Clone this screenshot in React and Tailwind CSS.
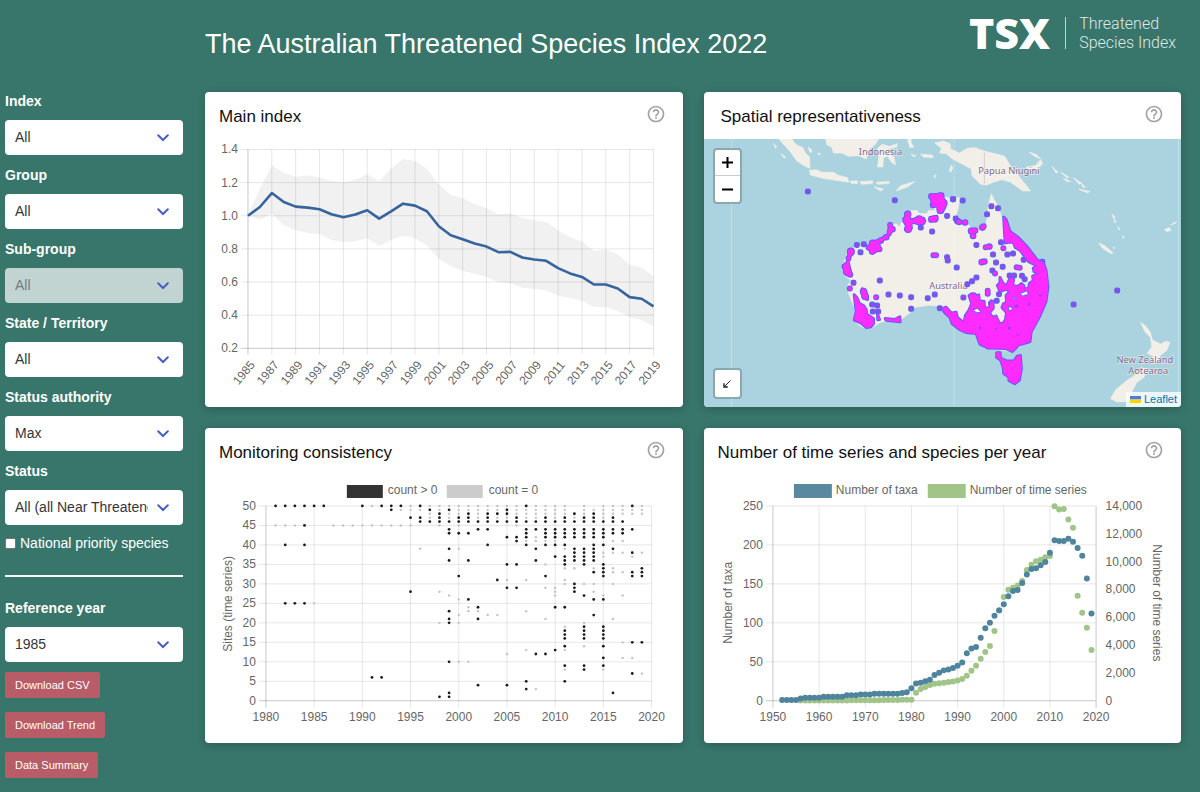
import { useState } from 'react'
import { MdHelpOutline } from 'react-icons/md'

const FILTERS = [
  { id: 'index', label: 'Index', options: ['All', 'Birds', 'Mammals', 'Plants'] },
  { id: 'group', label: 'Group', options: ['All'] },
  { id: 'subgroup', label: 'Sub-group', options: ['All'], disabled: true },
  { id: 'state', label: 'State / Territory', options: ['All', 'New South Wales', 'Queensland', 'Victoria'] },
  { id: 'authority', label: 'Status authority', options: ['Max', 'EPBC', 'BirdActionPlan'] },
  { id: 'status', label: 'Status', options: ['All (all Near Threatened and Threatened)', 'Near Threatened'] },
]

// Main index, one value per year from 1985
const INDEX = [1, 1.053, 1.137, 1.083, 1.055, 1.049, 1.039, 1.009, 0.991, 1.007, 1.033, 0.983, 1.027, 1.073, 1.061, 1.027, 0.937, 0.882, 0.858, 0.832, 0.814, 0.78, 0.782, 0.748, 0.736, 0.728, 0.684, 0.652, 0.631, 0.585, 0.585, 0.561, 0.509, 0.499, 0.453]
const UPPER = [1, 1.163, 1.304, 1.26, 1.235, 1.245, 1.231, 1.211, 1.201, 1.217, 1.25, 1.209, 1.284, 1.342, 1.33, 1.284, 1.189, 1.125, 1.105, 1.071, 1.045, 1.009, 1.015, 0.987, 0.973, 0.963, 0.912, 0.87, 0.844, 0.786, 0.796, 0.768, 0.702, 0.688, 0.635]
const LOWER = [1, 0.977, 1.013, 0.943, 0.912, 0.898, 0.888, 0.854, 0.84, 0.848, 0.864, 0.818, 0.854, 0.88, 0.864, 0.822, 0.74, 0.696, 0.668, 0.65, 0.631, 0.599, 0.593, 0.565, 0.559, 0.549, 0.519, 0.503, 0.485, 0.449, 0.449, 0.425, 0.387, 0.371, 0.332]

// Sites with a count, by year
const COUNTED = {
  1981: [50], 1982: [50, 40, 25], 1983: [50, 25], 1984: [50, 45, 40, 25], 1985: [50], 1986: [50], 1990: [50],
  1991: [6], 1992: [50, 6], 1993: [50, 49], 1994: [50], 1995: [47, 28], 1996: [50, 47, 46], 1997: [49, 46],
  1998: [48, 47, 46, 1],
  1999: [49, 46, 44, 43, 39, 36, 23, 21, 20, 10, 2, 1],
  2000: [47, 46, 43, 32],
  2001: [48, 47, 46, 43, 36, 26],
  2002: [46, 44, 24, 21, 4],
  2003: [48, 47, 46, 44, 40],
  2004: [48, 46, 31],
  2005: [49, 48, 46, 42, 35, 29, 4],
  2006: [47, 46, 42, 41, 35, 29],
  2007: [50, 46, 44, 43, 42, 40, 5, 3],
  2008: [46, 44, 39, 36, 12],
  2009: [47, 46, 44, 43, 42, 40, 32, 12],
  2010: [46, 44, 43, 42, 40, 37, 24, 13],
  2011: [47, 46, 44, 43, 42, 40, 37, 36, 35, 24, 18, 17, 16, 14, 9, 5],
  2012: [48, 46, 44, 43, 42, 39, 38, 37, 36, 30, 29, 28],
  2013: [47, 46, 44, 43, 42, 39, 38, 37, 36, 35, 27, 19, 18, 17, 16, 9, 8],
  2014: [48, 47, 46, 44, 43, 42, 40, 39, 38, 37, 36, 33, 26, 22],
  2015: [46, 44, 43, 42, 40, 35, 34, 33, 32, 26, 19, 18, 17, 16, 14, 11, 9],
  2016: [47, 46, 44, 43, 39, 2],
  2017: [46, 44, 43],
  2018: [50, 44, 38, 33, 32, 15, 7],
  2019: [34, 33, 32, 15],
}

// Sites surveyed with nothing found, by year
const ZERO = {
  1981: [45], 1982: [45], 1983: [45], 1985: [25], 1987: [45], 1988: [45], 1989: [45], 1990: [45],
  1991: [50, 45], 1992: [45], 1993: [45], 1994: [49, 45], 1995: [50, 49, 45], 1996: [49, 39], 1997: [50, 48, 47],
  1998: [50, 49, 45, 28, 20],
  1999: [50, 48, 47, 27],
  2000: [50, 49, 48, 45, 39, 26, 22, 20, 10],
  2001: [50, 49, 24, 23, 10],
  2002: [50, 49, 48, 47, 23],
  2003: [50, 49, 22],
  2004: [50, 49, 47, 22],
  2005: [50, 47, 31, 12],
  2006: [50, 49, 48, 45],
  2007: [49, 48, 47, 41, 31, 23, 13],
  2008: [50, 49, 48, 47, 42, 41, 3],
  2009: [50, 49, 48, 41, 35, 29, 21],
  2010: [50, 49, 48, 47, 41, 29, 28, 27],
  2011: [50, 49, 48, 39, 34, 31, 30, 19, 13, 8],
  2012: [47, 34, 30],
  2013: [50, 49, 48, 30, 20, 14],
  2014: [49, 34, 30, 28],
  2015: [50, 49, 48, 47, 38, 37, 27, 8],
  2016: [50, 49, 48, 41, 38, 34, 33, 30, 21],
  2017: [50, 49, 48, 41, 38, 33, 27, 15, 11],
  2018: [49, 48, 37, 11],
  2019: [50, 49, 48, 38, 7],
}

// Both start in 1952
const TAXA = [1, 1, 1, 1, 3, 4, 4, 4, 4, 5, 5, 5, 5, 5, 7, 7, 7, 8, 8, 8, 9, 9, 9, 9, 9, 9, 10, 11, 16, 22, 23, 25, 27, 33, 36, 39, 40, 42, 45, 49, 61, 67, 69, 81, 93, 100, 109, 116, 124, 134, 141, 142, 151, 162, 169, 170, 174, 178, 190, 206, 205, 205, 208, 204, 196, 186, 157, 112]
const SERIES = [10, 10, 10, 10, 15, 15, 15, 15, 20, 20, 20, 20, 25, 25, 25, 30, 30, 35, 35, 40, 40, 45, 50, 50, 55, 60, 65, 70, 80, 575, 840, 985, 1130, 1220, 1250, 1290, 1340, 1390, 1460, 1560, 1800, 2160, 2520, 3020, 3500, 3930, 5010, 6500, 7455, 7980, 8130, 8290, 8600, 9400, 9780, 10020, 10140, 10310, 10400, 13980, 13740, 13780, 13020, 12440, 7550, 6330, 5250, 3640]

const range = (from, to, step) => {
  const out = []
  for (let v = from; v <= to; v += step) out.push(v)
  return out
}

function FilterSelect({ id, label, options, disabled }) {
  return (
    <div className="flex flex-col gap-[10px]">
      <label htmlFor={id} className="text-[14px] leading-[17px] font-bold text-white">{label}</label>
      <div className={disabled ? 'relative rounded bg-[#c2d4d1]' : 'relative rounded bg-white'}>
        <select
          id={id}
          disabled={disabled}
          className="block w-full h-[35px] appearance-none rounded bg-transparent pl-[10px] pr-[35px] text-[14px] text-[#363636] disabled:text-[#6f7f7c] disabled:opacity-100"
        >
          {options.map((o) => (
            <option key={o}>{o}</option>
          ))}
        </select>
        <svg className="pointer-events-none absolute right-[14px] top-[14px]" width="12" height="8" viewBox="0 0 12 8" fill="none" stroke="#485fc7" strokeWidth="2" strokeLinecap="round">
          <path d="M1.2 1.3 L6 6 L10.8 1.3" />
        </svg>
      </div>
    </div>
  )
}

function ActionButton({ children }) {
  return (
    <button type="button" className="h-[26px] rounded-[2px] bg-[#b85c67] px-[10px] text-[11px] text-white hover:bg-[#a8505b]">
      {children}
    </button>
  )
}

function Card({ title, help = true, wide, children }) {
  return (
    <section className="rounded bg-white shadow-[0_2px_8px_rgba(0,0,0,0.2)] overflow-hidden">
      <div className={`flex items-center justify-between h-[47px] pr-[17px] ${wide ? 'pl-[17px]' : 'pl-[14px]'}`}>
        <h2 className="pt-[2px] text-[17px] leading-[20px] text-[#111]">{title}</h2>
        {help && (
          <button type="button" aria-label={`About ${title}`} className="mb-1 text-[#a3a3a3]">
            <MdHelpOutline size={20} />
          </button>
        )}
      </div>
      {children}
    </section>
  )
}

function MainIndexChart() {
  const x = (year) => 43 + ((year - 1985) / 34) * 406
  const y = (v) => 209.5 - ((v - 0.2) / 1.2) * 199
  const line = INDEX.map((v, i) => `${x(1985 + i)},${y(v)}`).join(' ')
  const band = [
    ...UPPER.map((v, i) => `${x(1985 + i)},${y(v)}`),
    ...LOWER.map((v, i) => `${x(1985 + i)},${y(v)}`).reverse(),
  ].join(' ')

  return (
    <svg viewBox="0 0 478 268" className="block w-full h-auto" fontSize="12" fill="#666">
      <polygon points={band} fill="#f1f1f1" />
      {[0.2, 0.4, 0.6, 0.8, 1, 1.2, 1.4].map((v) => (
        <g key={v}>
          <line x1="36" x2="449" y1={y(v)} y2={y(v)} stroke="#000" strokeOpacity={v === 0.2 ? 0.22 : 0.1} />
          <text x="33" y={y(v) + 4} textAnchor="end">{v.toFixed(1)}</text>
        </g>
      ))}
      {range(1985, 2019, 2).map((year) => (
        <g key={year}>
          <line x1={x(year)} x2={x(year)} y1="10" y2="216" stroke="#000" strokeOpacity={year === 1985 ? 0.22 : 0.1} />
          <text transform={`translate(${x(year) - 4} 234) rotate(-50)`} y="4" textAnchor="middle">{year}</text>
        </g>
      ))}
      <polyline points={line} fill="none" stroke="#36649c" strokeWidth="2.6" strokeLinejoin="round" />
    </svg>
  )
}

function ConsistencyChart() {
  const x = (year) => 61 + ((year - 1980) / 40) * 386
  const y = (v) => 226 - (v / 50) * 195
  const dots = (data, fill, r) =>
    Object.entries(data).flatMap(([year, sites]) =>
      sites.map((s) => <circle key={`${year}-${s}`} cx={x(Number(year))} cy={y(s)} r={r} fill={fill} />)
    )

  return (
    <svg viewBox="0 0 478 268" className="block w-full h-auto" fontSize="12" fill="#666">
      <rect x="142" y="10" width="36" height="13" fill="#333" />
      <text x="183" y="19">count &gt; 0</text>
      <rect x="242" y="10" width="36" height="13" fill="#ccc" />
      <text x="284" y="19">count = 0</text>
      {range(0, 50, 5).map((v) => (
        <g key={v}>
          <line x1="54" x2="447" y1={y(v)} y2={y(v)} stroke="#000" strokeOpacity={v === 0 ? 0.22 : 0.1} />
          <text x="51" y={y(v) + 4} textAnchor="end">{v}</text>
        </g>
      ))}
      {range(1980, 2020, 5).map((year) => (
        <g key={year}>
          <line x1={x(year)} x2={x(year)} y1="31" y2="233" stroke="#000" strokeOpacity={year === 1980 ? 0.22 : 0.1} />
          <text x={x(year)} y="246" textAnchor="middle">{year}</text>
        </g>
      ))}
      <text transform="translate(23 129) rotate(-90)" y="4" textAnchor="middle">Sites (time series)</text>
      {dots(ZERO, '#c4c4c4', 1.2)}
      {dots(COUNTED, '#1c1c1c', 1.4)}
    </svg>
  )
}

function TimeSeriesChart() {
  const x = (year) => 69 + ((year - 1950) / 70) * 323.5
  const y = (v, max) => 226 - (v / max) * 195

  return (
    <svg viewBox="0 0 478 268" className="block w-full h-auto" fontSize="12" fill="#666">
      <rect x="90" y="9" width="38" height="14" fill="#58899f" />
      <text x="132" y="19">Number of taxa</text>
      <rect x="224" y="9" width="38" height="14" fill="#a1c489" />
      <text x="266" y="19">Number of time series</text>
      {range(0, 250, 50).map((v) => (
        <g key={v}>
          <line x1="62" x2="392" y1={y(v, 250)} y2={y(v, 250)} stroke="#000" strokeOpacity={v === 0 ? 0.22 : 0.1} />
          <text x="59" y={y(v, 250) + 4} textAnchor="end">{v}</text>
        </g>
      ))}
      {range(0, 14000, 2000).map((v) => (
        <text key={v} x="402" y={y(v, 14000) + 4}>{v.toLocaleString('en-US')}</text>
      ))}
      {range(1950, 2020, 10).map((year) => (
        <g key={year}>
          <line x1={x(year)} x2={x(year)} y1="31" y2="233" stroke="#000" strokeOpacity={year === 1950 || year === 2020 ? 0.22 : 0.1} />
          <text x={x(year)} y="246" textAnchor="middle">{year}</text>
        </g>
      ))}
      <text transform="translate(24 128) rotate(-90)" y="4" textAnchor="middle">Number of taxa</text>
      <text transform="translate(453 128) rotate(90)" y="4" textAnchor="middle">Number of time series</text>
      {SERIES.map((v, i) => i > 3 && <circle key={i} cx={x(1952 + i)} cy={y(v, 14000)} r="3" fill="#a1c489" />)}
      {TAXA.map((v, i) => <circle key={i} cx={x(1952 + i)} cy={y(v, 250)} r="3" fill="#4f849d" />)}
    </svg>
  )
}

// Single survey sites, west and east of the tile seam
const WEST_SITES = [
  [321, 320], [582, 346], [757, 343], [739, 393], [694, 440], [468, 480], [479, 502], [537, 587], [563, 629], [597, 632],
  [631, 637], [631, 672], [681, 640], [702, 629], [768, 548], [739, 517], [741, 527], [489, 478], [660, 428],
  [516, 680], [514, 659], [529, 662], [532, 680], [458, 594], [717, 670],
]
const EAST_SITES = [
  [96, 347], [182, 364], [202, 370], [169, 388], [137, 480], [187, 509], [230, 509], [247, 506], [196, 533], [216, 546],
  [185, 557], [279, 525], [137, 578], [124, 589], [110, 598], [98, 638], [429, 659], [560, 617], [75, 401], [211, 472],
  [335, 531], [237, 572], [250, 572], [282, 583], [274, 573], [67, 343], [205, 628], [198, 648], [181, 656],
]

// [cx, cy, r]
const WEST_BLOBS = [
  [621, 388, 8], [614, 405, 7], [622, 432, 9], [655, 403, 9], [664, 410, 8], [645, 405, 6], [692, 403, 7], [703, 401, 8],
  [692, 335, 7], [700, 345, 8], [718, 333, 8], [697, 360, 7], [728, 356, 9], [719, 376, 8], [568, 420, 6], [575, 433, 7],
  [556, 457, 7], [540, 467, 7], [516, 476, 9], [528, 484, 8], [514, 500, 7], [536, 493, 6], [503, 488, 6], [450, 500, 9],
  [443, 520, 6], [432, 545, 7], [438, 560, 9], [448, 570, 6], [488, 620, 8], [492, 634, 8], [526, 637, 6], [447, 611, 6],
  [770, 408, 7], [698, 511, 6], [706, 511, 6],
]
const EAST_BLOBS = [
  [85, 411, 7], [103, 413, 7], [122, 438, 8], [133, 437, 7], [127, 453, 7], [155, 428, 7], [159, 424, 6], [165, 487, 6],
  [176, 485, 7], [153, 532, 7], [161, 530, 7], [258, 547, 6], [267, 549, 6], [218, 490, 6], [210, 602, 8], [193, 566, 6],
  [272, 606, 8], [128, 634, 9], [132, 652, 8], [152, 655, 8], [171, 618, 6], [171, 627, 6], [245, 585, 5], [237, 640, 8],
  [260, 655, 9], [184, 668, 5],
]

const WEST_CLUSTERS = [
  'M688 330 L726 327 L728 342 L736 352 L732 368 L724 382 L713 382 L710 364 L694 362 L693 344 Z',
  'M616 384 L624 382 L626 402 L650 406 L668 400 L672 408 L656 418 L640 412 L630 416 L632 430 L620 438 L614 434 L618 424 L610 410 Z',
  'M688 398 L708 394 L706 408 L688 409 Z',
  'M568 416 L576 430 L568 448 L548 464 L534 474 L536 494 L516 504 L502 490 L512 472 L534 466 L560 450 Z',
  'M446 494 L456 496 L456 506 L446 516 L442 532 L448 556 L452 572 L436 570 L428 544 L440 530 Z',
  'M484 612 L494 618 L500 634 L500 644 L490 640 L484 628 Z',
  'M460 630 L468 638 L476 656 L488 662 L496 674 L498 688 L518 702 L518 716 L510 726 L496 728 L480 714 L460 706 L466 680 Z',
  'M530 688 L536 704 L531 705 Z',
  'M553 701 L582 704 L597 696 L598 711 L556 706 Z',
]

const EAST_CLUSTERS = [
  // Eastern seaboard down through Victoria
  'M219 396 L226 404 L238 440 L262 457 L288 484 L320 526 L338 534 L346 556 L352 606 L346 650 L328 692 L302 742 L298 770 L264 781 L245 800 L224 791 L172 790 L148 778 L136 746 L106 743 L86 734 L64 716 L58 698 L44 686 L34 672 L46 667 L62 685 L76 682 L80 698 L100 714 L104 692 L115 676 L123 656 L115 632 L122 628 L132 640 L144 630 L146 650 L160 650 L162 670 L178 668 L182 648 L188 650 L186 672 L176 684 L186 698 L196 694 L206 716 L216 716 L224 706 L228 684 L214 668 L218 658 L228 652 L226 632 L238 620 L226 613 L208 620 L200 602 L208 596 L208 578 L216 594 L228 603 L238 580 L248 584 L246 602 L262 605 L272 596 L280 604 L276 614 L294 610 L296 596 L308 588 L306 574 L328 565 L310 560 L308 550 L322 544 L294 530 L268 496 L254 488 L248 472 L234 472 L224 474 L222 452 Z',
  // Tasmania
  'M198 804 L208 804 L210 820 L228 829 L250 829 L260 814 L269 812 L272 852 L266 886 L252 897 L235 887 L234 876 L219 866 L218 850 L210 826 L198 818 Z',
]

function Coverage({ paths, blobs }) {
  return (
    <g strokeLinejoin="round">
      <g fill="#5c5cff" stroke="#5c5cff" strokeWidth="9">
        {paths.map((d) => <path key={d} d={d} />)}
        {blobs.map(([cx, cy, r]) => <circle key={`${cx}-${cy}`} cx={cx} cy={cy} r={r} strokeWidth="6" />)}
      </g>
      <g fill="#ff2bff" stroke="#ff2bff" strokeWidth="3">
        {paths.map((d) => <path key={d} d={d} />)}
        {blobs.map(([cx, cy, r]) => <circle key={`${cx}-${cy}`} cx={cx} cy={cy} r={r} strokeWidth="0" />)}
      </g>
    </g>
  )
}

function Sites({ points }) {
  return (
    <g fill="#9a44ea" stroke="#5a64f2" strokeWidth="4">
      {points.map(([cx, cy]) => (
        <rect key={`${cx}-${cy}`} x={cx - 7} y={cy - 7} width="14" height="14" rx="5" />
      ))}
    </g>
  )
}

function SpatialMap() {
  return (
    <div className="relative bg-[#aad3df]">
      <svg viewBox="0 0 1434 805" className="block w-full h-auto">
        <g fill="#f2efe9" stroke="#f2efe9" strokeWidth="2" strokeLinejoin="round">
          {/* Indonesia, New Guinea and the Australian mainland */}
          <g transform="translate(-9 -162)">
            <path d="M232 160 L272 160 L284 178 L306 188 L312 202 L326 216 L327 250 L312 244 L288 228 L268 200 Z" />
            <path d="M218 176 L228 186 L224 190 Z M240 206 L254 216 L250 220 Z M322 186 L334 196 L328 204 Z M350 204 L360 206 L354 210 Z" />
            <path d="M326 256 L346 254 L364 262 L398 262 L410 270 L440 278 L444 292 L404 286 L366 280 L328 270 Z" />
            <path d="M374 160 L534 160 L524 178 L508 190 L496 222 L474 212 L442 214 L424 204 L398 204 L392 186 L378 180 Z" />
            <path d="M530 190 L544 178 L566 184 L590 176 L588 186 L556 194 L566 206 L580 216 L584 240 L572 232 L560 214 L548 218 L546 246 L530 246 L534 216 Z" />
            <path d="M448 288 L470 288 L470 296 L452 296 Z M478 290 L516 288 L514 296 L482 298 Z M526 292 L566 290 L564 296 L530 298 Z M520 306 L548 312 L540 318 Z M586 318 L600 302 L642 290 L620 306 Z" />
            <path d="M620 166 L630 160 L632 176 L640 186 L628 188 Z M630 208 L646 212 L640 216 Z M660 208 L694 210 L698 218 L668 216 Z M752 240 L756 248 L750 262 L746 258 Z M700 272 L706 270 L702 280 Z" />
            <path d="M702 174 L728 168 L748 176 L750 192 L776 204 L800 190 L824 188 L850 198 L890 208 L912 214 L930 244 L950 268 L990 318 L966 318 L930 292 L904 284 L878 292 L858 300 L840 298 L814 272 L812 252 L782 236 L752 220 L736 206 L716 204 L722 190 Z" />
            <path d="M426 542 L442 500 L462 486 L510 478 L548 460 L568 424 L586 416 L596 426 L612 390 L628 378 L648 376 L656 386 L678 386 L684 376 L704 378 L690 350 L698 328 L724 332 L752 342 L776 338 L774 364 L766 392 L790 408 L812 428 L836 434 L856 418 L860 392 L862 366 L868 340 L872 326 L880 344 L894 368 L904 400 L924 432 L950 460 L982 498 L1024 534 L1040 580 L1040 640 L1014 700 L990 766 L936 800 L850 790 L822 750 L776 730 L742 690 L716 664 L686 661 L640 668 L628 684 L600 704 L540 712 L514 728 L486 728 L458 708 L462 672 L444 628 L440 604 L450 586 L430 572 Z" />
          </g>
          {/* Pacific islands and New Zealand */}
          <g transform="translate(681 -162)">
            <path d="M286 246 L314 242 L330 224 L336 236 L318 254 L290 252 Z M296 202 L316 208 L330 222 L312 214 Z M364 244 L382 262 L376 264 Z M390 262 L414 276 L410 280 Z M398 280 L420 290 L408 290 Z M428 278 L452 294 L446 298 Z M450 292 L464 306 L458 308 Z M444 312 L478 320 L470 324 Z" />
            <path d="M504 474 L522 482 L548 504 L540 506 L516 490 Z M544 388 L554 396 L550 402 Z M550 402 L558 412 L552 412 Z M562 424 L568 434 L564 434 Z M702 434 L716 428 L722 436 L708 440 Z M720 420 L738 410 L736 414 Z M576 452 L582 458 L578 460 Z M548 486 L552 488 L550 492 Z" />
            <path d="M630 713 L644 722 L658 740 L666 766 L690 778 L704 770 L718 772 L710 796 L690 812 L680 832 L664 832 L668 814 L650 806 L664 786 L660 758 L644 742 Z" />
            <path d="M650 852 L640 878 L618 894 L606 918 L590 950 L560 952 L540 942 L556 914 L588 888 L616 870 L630 850 Z" />
          </g>
        </g>
        <g stroke="#fff" strokeOpacity="0.4" strokeWidth="2">
          <line x1="83" x2="83" y1="0" y2="805" />
          <line x1="751" x2="751" y1="0" y2="805" />
          <line x1="1425" x2="1425" y1="0" y2="805" />
        </g>
        <line x1="842" x2="842" y1="40" y2="134" stroke="#cdb5c8" strokeWidth="2" />

        <g fontFamily="'Noto Sans', 'Open Sans', sans-serif" fontSize="28" fill="#84648a" stroke="#fff" strokeOpacity="0.6" strokeWidth="4" paintOrder="stroke" textAnchor="middle">
          <text x="530" y="49">Indonesia</text>
          <text x="916" y="104">Papua Niugini</text>
          <text x="734" y="449">Australia</text>
          <text x="1324" y="673">New Zealand</text>
          <text x="1334" y="707">Aotearoa</text>
        </g>

        <g transform="translate(-9 -162)">
          <Sites points={WEST_SITES} />
          <Coverage paths={WEST_CLUSTERS} blobs={WEST_BLOBS} />
        </g>
        <g transform="translate(681 -162)">
          <Sites points={EAST_SITES} />
          <Coverage paths={EAST_CLUSTERS} blobs={EAST_BLOBS} />
          <g fill="#f2efe9" stroke="#5c5cff" strokeWidth="3" strokeLinejoin="round">
            <path d="M268 626 L288 618 L294 628 L276 634 Z" />
            <path d="M246 640 L254 636 L252 646 Z" />
            <path d="M232 664 L248 670 L236 680 Z" />
            <path d="M126 676 L140 670 L152 682 L138 684 Z" />
          </g>
          <g fill="#9a3ff0">
            <circle cx="295" cy="658" r="4" />
            <circle cx="329" cy="632" r="4" />
            <circle cx="148" cy="729" r="4" />
            <circle cx="236" cy="729" r="5" />
            <circle cx="196" cy="731" r="3" />
            <circle cx="262" cy="750" r="3" />
            <circle cx="258" cy="664" r="5" />
          </g>
        </g>
      </svg>

      <div className="absolute left-[9px] top-[9px] flex flex-col rounded border-2 border-black/20 bg-clip-padding bg-white">
        <button type="button" aria-label="Zoom in" className="flex h-[26px] w-[25px] items-center justify-center border-b border-[#ccc]">
          <svg width="11" height="11" viewBox="0 0 11 11" stroke="#000" strokeWidth="2"><path d="M0 5.5 H11 M5.5 0 V11" /></svg>
        </button>
        <button type="button" aria-label="Zoom out" className="flex h-[26px] w-[25px] items-center justify-center">
          <svg width="11" height="11" viewBox="0 0 11 11" stroke="#000" strokeWidth="2"><path d="M0 5.5 H11" /></svg>
        </button>
      </div>
      <button type="button" aria-label="Reset view" className="absolute left-[9px] bottom-[8px] flex h-[31px] w-[29px] items-center justify-center rounded border-2 border-black/20 bg-clip-padding bg-white">
        <svg width="8" height="8" viewBox="0 0 8 8" fill="none" stroke="#222">
          <path d="M7.5 0.5 L1 7" />
          <path d="M1 3.2 V7 H4.8" strokeWidth="1.4" />
        </svg>
      </button>
      <div className="absolute right-0 bottom-0 flex h-[15px] items-center gap-[3px] bg-white/80 px-[4px]">
        <svg width="11" height="7" viewBox="0 0 11 7">
          <rect width="11" height="3.5" fill="#4c7be1" />
          <rect y="3.5" width="11" height="3.5" fill="#ffd500" />
        </svg>
        <a href="#leaflet" className="text-[11px] leading-[15px] text-[#0078a8]">Leaflet</a>
      </div>
    </div>
  )
}

export default function App() {
  const [priority, setPriority] = useState(false)

  return (
    <div className="min-h-screen bg-[#38756a] font-['Liberation_Sans',Arial,sans-serif]">
      <header className="flex h-[92px] items-start justify-between pl-[205px] pr-[24px]">
        <h1 className="pt-[29px] text-[27px] leading-[30px] text-white">The Australian Threatened Species Index 2022</h1>
        <div className="flex items-center pt-[14px] text-white">
          <span className="font-['Open_Sans',sans-serif] text-[43px] leading-[36px] font-extrabold">TSX</span>
          <span className="ml-[15px] mr-[13px] h-[32px] w-px bg-white/70" />
          <span className="flex flex-col font-['Roboto',sans-serif] text-[16px] leading-[19px] font-light text-[#dcebe8]">
            <span>Threatened</span>
            <span>Species Index</span>
          </span>
        </div>
      </header>

      <div className="flex items-start gap-[22px] pl-[5px] pr-[19px]">
        <aside className="w-[178px] shrink-0 pt-[1px]">
          <div className="flex flex-col gap-[12px]">
            {FILTERS.map((f) => (
              <FilterSelect key={f.id} {...f} />
            ))}
          </div>

          <label className="mt-[9px] flex items-center gap-[4px] text-[14px] leading-[18px] text-white whitespace-nowrap">
            <input
              type="checkbox"
              checked={priority}
              onChange={(e) => setPriority(e.target.checked)}
              className="h-[11px] w-[11px] appearance-none rounded-[2px] border border-[#767676] bg-white checked:bg-[#485fc7]"
            />
            National priority species
          </label>

          <hr className="mt-[23px] mb-[23px] border-t-2 border-white" />

          <FilterSelect id="year" label="Reference year" options={['1985', '1990', '1995', '2000']} />

          <div className="mt-[10px] flex flex-col items-start gap-[14px]">
            <ActionButton>Download CSV</ActionButton>
            <ActionButton>Download Trend</ActionButton>
            <ActionButton>Data Summary</ActionButton>
          </div>
        </aside>

        <main className="grid min-w-0 flex-1 grid-cols-2 gap-[21px]">
          <Card title="Main index"><MainIndexChart /></Card>
          <Card title="Spatial representativeness" wide><SpatialMap /></Card>
          <Card title="Monitoring consistency"><ConsistencyChart /></Card>
          <Card title="Number of time series and species per year"><TimeSeriesChart /></Card>
        </main>
      </div>
    </div>
  )
}
